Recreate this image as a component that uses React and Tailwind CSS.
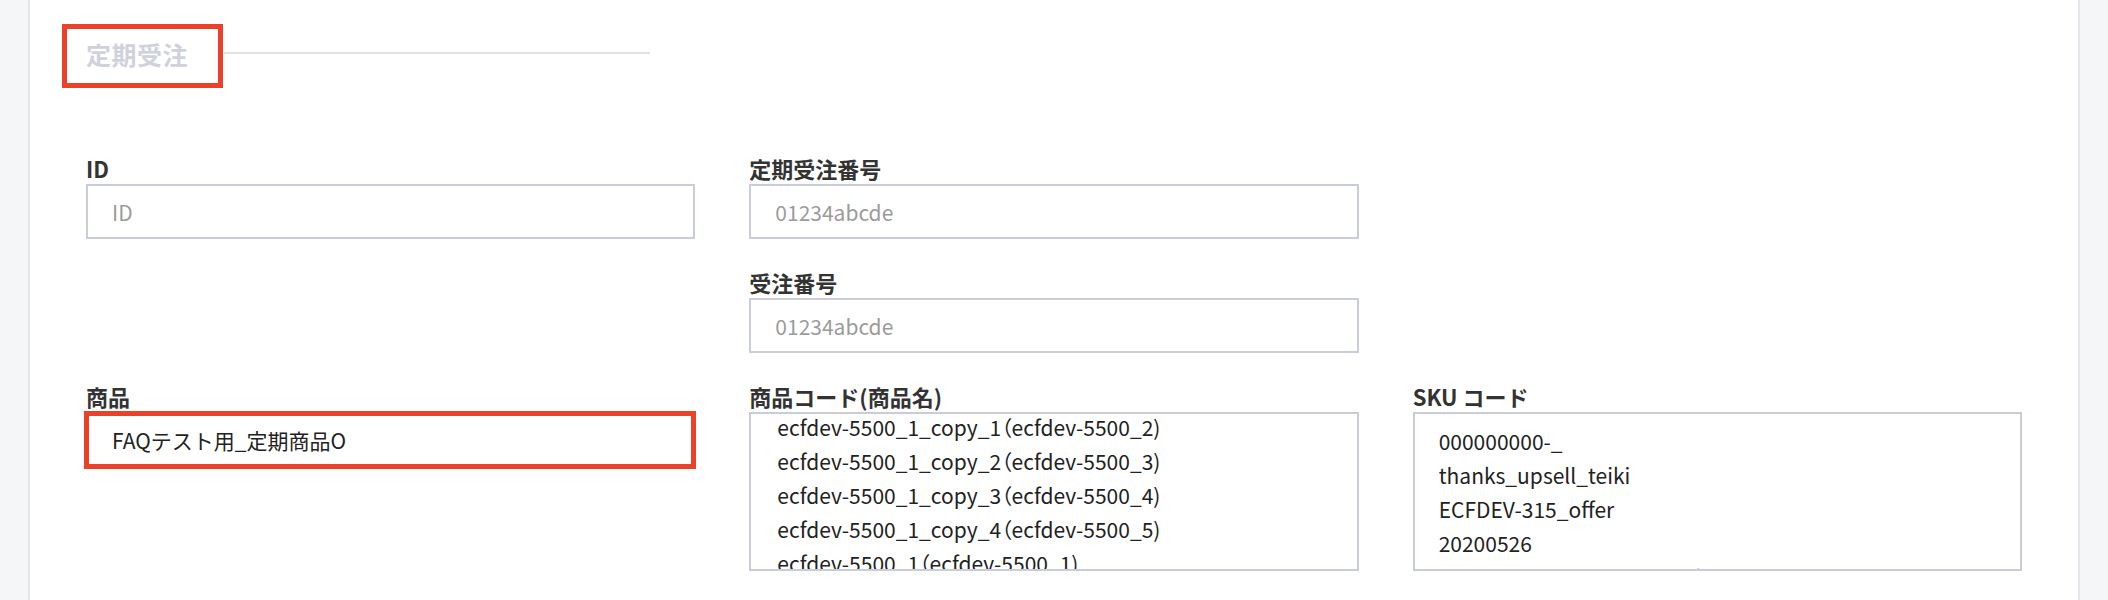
const items = [
  "ecfdev-5500_1_copy_1（ecfdev-5500_2)",
  "ecfdev-5500_1_copy_2（ecfdev-5500_3)",
  "ecfdev-5500_1_copy_3（ecfdev-5500_4)",
  "ecfdev-5500_1_copy_4（ecfdev-5500_5)",
  "ecfdev-5500_1（ecfdev-5500_1)",
];

const skus = [
  "000000000-_",
  "thanks_upsell_teiki",
  "ECFDEV-315_offer",
  "20200526",
  "ECFDEV-5500_1_copy_1_sku",
];

const Label = ({ children }) => (
  <div className="h-[32px] text-[22px] leading-[32px] font-bold text-[#333333]">
    {children}
  </div>
);

const TextField = ({ placeholder, value }) => (
  <input
    readOnly
    placeholder={placeholder}
    value={value || ""}
    className="block w-full h-[55px] border-2 border-[#c9ccd9] bg-white px-[24px] text-[21px] text-[#222222] placeholder:text-[#9b9b9b] outline-none"
  />
);

const App = () => {
  return (
    <div
      className="min-h-[600px] bg-[#f5f6f8] px-[28px]"
      style={{ fontFamily: '"Noto Sans CJK JP", "Noto Sans", sans-serif' }}
    >
      <div className="min-h-[600px] bg-white border-x-2 border-[#e4e6eb] pt-[36px] px-[56px]">
        {/* section title */}
        <div className="flex items-center w-[564px] h-[36px]">
          <div className="relative">
            <span className="text-[25px] leading-[36px] font-bold tracking-[0.5px] text-[#cfd2dd]">
              定期受注
            </span>
            <div className="absolute -left-[24px] -top-[12px] w-[161px] h-[64px] border-[5px] border-[#ea4228]"></div>
          </div>
          <div className="flex-1 h-[2px] bg-[#e2e3e9] ml-[36px] mt-[-2px]"></div>
        </div>

        <div className="grid grid-cols-3 gap-x-[54px] gap-y-[27px] mt-[80px]">
          <div>
            <Label>ID</Label>
            <TextField placeholder="ID" />
          </div>
          <div>
            <Label>定期受注番号</Label>
            <TextField placeholder="01234abcde" />
          </div>
          <div></div>

          <div></div>
          <div>
            <Label>受注番号</Label>
            <TextField placeholder="01234abcde" />
          </div>
          <div></div>

          <div>
            <Label>商品</Label>
            <div className="relative">
              <TextField value="FAQテスト用_定期商品O" />
              <div className="absolute -left-[2px] -top-[1px] -right-[1px] -bottom-[2px] border-[5px] border-[#ea4228]"></div>
            </div>
          </div>
          <div>
            <Label>商品コード(商品名)</Label>
            <div className="h-[159px] border-2 border-[#c9ccd9] overflow-hidden">
              <div className="-mt-[4px]">
                {items.map((item) => (
                  <div
                    key={item}
                    className="h-[34px] leading-[34px] pl-[26px] text-[21px] text-[#222222] whitespace-nowrap [font-feature-settings:'palt']"
                  >
                    {item}
                  </div>
                ))}
              </div>
            </div>
          </div>
          <div>
            <Label>SKU コード</Label>
            <div className="h-[159px] border-2 border-[#c9ccd9] overflow-hidden pt-[10px] px-[24px]">
              {skus.map((sku) => (
                <div
                  key={sku}
                  className="h-[34px] leading-[34px] text-[21px] text-[#222222] whitespace-nowrap"
                >
                  {sku}
                </div>
              ))}
            </div>
          </div>
        </div>
      </div>
    </div>
  );
};

export default App;
